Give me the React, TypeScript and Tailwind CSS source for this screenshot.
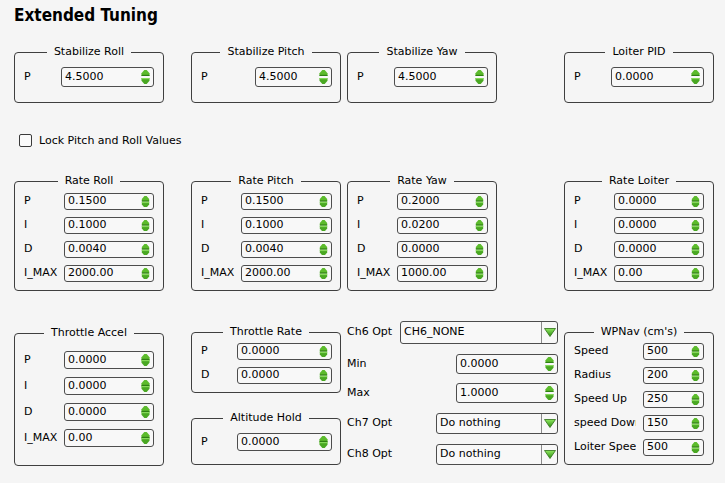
import type { ReactNode } from "react";

type Field = { label: string; value: string };

function SpinArrows() {
  return (
    <div className="flex flex-col justify-between h-full py-[2px] pr-[3px] shrink-0">
      <svg width="9" height="6" viewBox="0 0 9 6">
        <path d="M3.3 0 L5.7 0 L8.5 3.2 L8.5 6 L0.5 6 L0.5 3.2 Z" fill="#5cbb2c" />
        <path d="M0.5 4.8 L8.5 4.8 L8.5 6 L0.5 6 Z" fill="#2f7f14" />
      </svg>
      <svg width="9" height="6" viewBox="0 0 9 6">
        <path d="M0.5 0 L8.5 0 L8.5 2.8 L5.7 6 L3.3 6 L0.5 2.8 Z" fill="#4aa823" />
        <path d="M0.5 0 L8.5 0 L8.5 1.2 L0.5 1.2 Z" fill="#86d95a" />
      </svg>
    </div>
  );
}

function SpinBox({ value, className }: { value: string; className: string }) {
  return (
    <div
      className={`flex items-center border border-[#4d4d4d] rounded-[3px] bg-[#f8f8f8] ${className}`}
    >
      <span className="flex-1 pl-[3px] whitespace-nowrap overflow-hidden">{value}</span>
      <SpinArrows />
    </div>
  );
}

function Combo({ value, className }: { value: string; className: string }) {
  return (
    <div
      className={`flex items-stretch border border-[#4d4d4d] rounded-[3px] bg-[#f8f8f8] ${className}`}
    >
      <span className="flex-1 flex items-center pl-[3px]">{value}</span>
      <div className="w-[16px] border-l border-[#8a8a8a] flex items-center justify-center">
        <svg width="12" height="9" viewBox="0 0 12 9">
          <defs>
            <linearGradient id="cg" x1="0" y1="0" x2="0" y2="1">
              <stop offset="0" stopColor="#8fe860" />
              <stop offset="1" stopColor="#2c8c10" />
            </linearGradient>
          </defs>
          <path d="M0.5 0.5 L11.5 0.5 L6 8.5 Z" fill="url(#cg)" stroke="#2d6e17" strokeWidth="0.8" />
        </svg>
      </div>
    </div>
  );
}

function Group({
  title,
  className,
  children,
}: {
  title: string;
  className: string;
  children: ReactNode;
}) {
  return (
    <fieldset className={`border border-[#3f3f3f] rounded-[4px] w-[150px] shrink-0 ${className}`}>
      <legend className="mx-auto px-[7px] leading-[14px]">{title}</legend>
      {children}
    </fieldset>
  );
}

function Rows({
  fields,
  labelW,
  inputW,
  rowH,
  gap,
}: {
  fields: Field[];
  labelW: string;
  inputW: string;
  rowH: string;
  gap: string;
}) {
  return (
    <div className={`flex flex-col ${gap} pl-[9px]`}>
      {fields.map((f) => (
        <div key={f.label} className={`flex items-center ${rowH}`}>
          <span className={`${labelW} whitespace-nowrap overflow-hidden shrink-0`}>{f.label}</span>
          <SpinBox value={f.value} className={`${inputW} h-full`} />
        </div>
      ))}
    </div>
  );
}

const pidx = (p: string, i: string, d: string, imax: string): Field[] => [
  { label: "P", value: p },
  { label: "I", value: i },
  { label: "D", value: d },
  { label: "I_MAX", value: imax },
];

export default function App() {
  return (
    <div className="w-[725px] h-[483px] bg-[#f5f5f5] overflow-hidden font-['DejaVu_Sans',sans-serif] text-[11px] text-black">
      <h1 className="pl-[14px] h-[30px] text-[17px] leading-[30px] font-bold font-['DejaVu_Sans_Condensed','DejaVu_Sans',sans-serif] [font-stretch:condensed]">
        Extended Tuning
      </h1>

      {/* stabilize row */}
      <div className="flex mt-[15px] pl-[14px]">
        <Group title="Stabilize Roll" className="">
          <div className="pt-[8px] pb-[15px]">
            <Rows fields={[{ label: "P", value: "4.5000" }]} labelW="w-[37px]" inputW="w-[93px]" rowH="h-[20px]" gap="" />
          </div>
        </Group>
        <Group title="Stabilize Pitch" className="ml-[27px]">
          <div className="pt-[8px] pb-[15px]">
            <Rows fields={[{ label: "P", value: "4.5000" }]} labelW="w-[54px]" inputW="w-[77px]" rowH="h-[20px]" gap="" />
          </div>
        </Group>
        <Group title="Stabilize Yaw" className="ml-[6px]">
          <div className="pt-[8px] pb-[15px]">
            <Rows fields={[{ label: "P", value: "4.5000" }]} labelW="w-[37px]" inputW="w-[94px]" rowH="h-[20px]" gap="" />
          </div>
        </Group>
        <Group title="Loiter PID" className="ml-[67px]">
          <div className="pt-[8px] pb-[15px]">
            <Rows fields={[{ label: "P", value: "0.0000" }]} labelW="w-[37px]" inputW="w-[93px]" rowH="h-[20px]" gap="" />
          </div>
        </Group>
      </div>

      <label className="flex items-center mt-[31px] pl-[19px] h-[13px]">
        <span className="w-[13px] h-[13px] border border-[#3a3a3a] rounded-[2px] bg-[#fafafa]" />
        <span className="ml-[7px] pt-[1px]">Lock Pitch and Roll Values</span>
      </label>

      {/* rate row */}
      <div className="flex mt-[27px] pl-[14px]">
        <Group title="Rate Roll" className="">
          <div className="pt-[5px] pb-[8px]">
            <Rows fields={pidx("0.1500", "0.1000", "0.0040", "2000.00")} labelW="w-[40px]" inputW="w-[90px]" rowH="h-[17px]" gap="gap-[7px]" />
          </div>
        </Group>
        <Group title="Rate Pitch" className="ml-[27px]">
          <div className="pt-[5px] pb-[8px]">
            <Rows fields={pidx("0.1500", "0.1000", "0.0040", "2000.00")} labelW="w-[40px]" inputW="w-[91px]" rowH="h-[17px]" gap="gap-[7px]" />
          </div>
        </Group>
        <Group title="Rate Yaw" className="ml-[6px]">
          <div className="pt-[5px] pb-[8px]">
            <Rows fields={pidx("0.2000", "0.0200", "0.0000", "1000.00")} labelW="w-[40px]" inputW="w-[91px]" rowH="h-[17px]" gap="gap-[7px]" />
          </div>
        </Group>
        <Group title="Rate Loiter" className="ml-[67px]">
          <div className="pt-[5px] pb-[8px]">
            <Rows fields={pidx("0.0000", "0.0000", "0.0000", "0.00")} labelW="w-[40px]" inputW="w-[90px]" rowH="h-[17px]" gap="gap-[7px]" />
          </div>
        </Group>
      </div>

      {/* bottom row */}
      <div className="flex mt-[30px] pl-[14px] items-start">
        <Group title="Throttle Accel" className="mt-[5px]">
          <div className="pt-[11px] pb-[18px]">
            <Rows fields={pidx("0.0000", "0.0000", "0.0000", "0.00")} labelW="w-[40px]" inputW="w-[90px]" rowH="h-[18px]" gap="gap-[8px]" />
          </div>
        </Group>

        <div className="flex flex-col ml-[27px] w-[150px] mt-[4px]">
          <Group title="Throttle Rate" className="">
            <div className="pt-[4px] pb-[8px]">
              <Rows
                fields={[
                  { label: "P", value: "0.0000" },
                  { label: "D", value: "0.0000" },
                ]}
                labelW="w-[36px]"
                inputW="w-[95px]"
                rowH="h-[17px]"
                gap="gap-[7px]"
              />
            </div>
          </Group>
          <Group title="Altitude Hold" className="mt-[18px]">
            <div className="pt-[8px] pb-[13px]">
              <Rows fields={[{ label: "P", value: "0.0000" }]} labelW="w-[36px]" inputW="w-[95px]" rowH="h-[18px]" gap="" />
            </div>
          </Group>
        </div>

        <div className="flex flex-col ml-[6px] w-[211px]">
          <div className="flex items-center justify-between h-[23px]">
            <span>Ch6 Opt</span>
            <Combo value="CH6_NONE" className="w-[158px] h-full" />
          </div>
          <div className="flex items-center justify-between h-[20px] mt-[10px]">
            <span>Min</span>
            <SpinBox value="0.0000" className="w-[102px] h-full" />
          </div>
          <div className="flex items-center justify-between h-[20px] mt-[9px]">
            <span>Max</span>
            <SpinBox value="1.0000" className="w-[102px] h-full" />
          </div>
          <div className="flex items-center justify-between h-[21px] mt-[10px]">
            <span>Ch7 Opt</span>
            <Combo value="Do nothing" className="w-[122px] h-full" />
          </div>
          <div className="flex items-center justify-between h-[21px] mt-[10px]">
            <span>Ch8 Opt</span>
            <Combo value="Do nothing" className="w-[122px] h-full" />
          </div>
        </div>

        <Group title="WPNav (cm's)" className="ml-[6px] mt-[4px]">
          <div className="pt-[4px] pb-[8px]">
            <Rows
              fields={[
                { label: "Speed", value: "500" },
                { label: "Radius", value: "200" },
                { label: "Speed Up", value: "250" },
                { label: "speed Down", value: "150" },
                { label: "Loiter Speed", value: "500" },
              ]}
              labelW="w-[62px] mr-[7px]"
              inputW="w-[61px]"
              rowH="h-[17px]"
              gap="gap-[7px]"
            />
          </div>
        </Group>
      </div>
    </div>
  );
}
